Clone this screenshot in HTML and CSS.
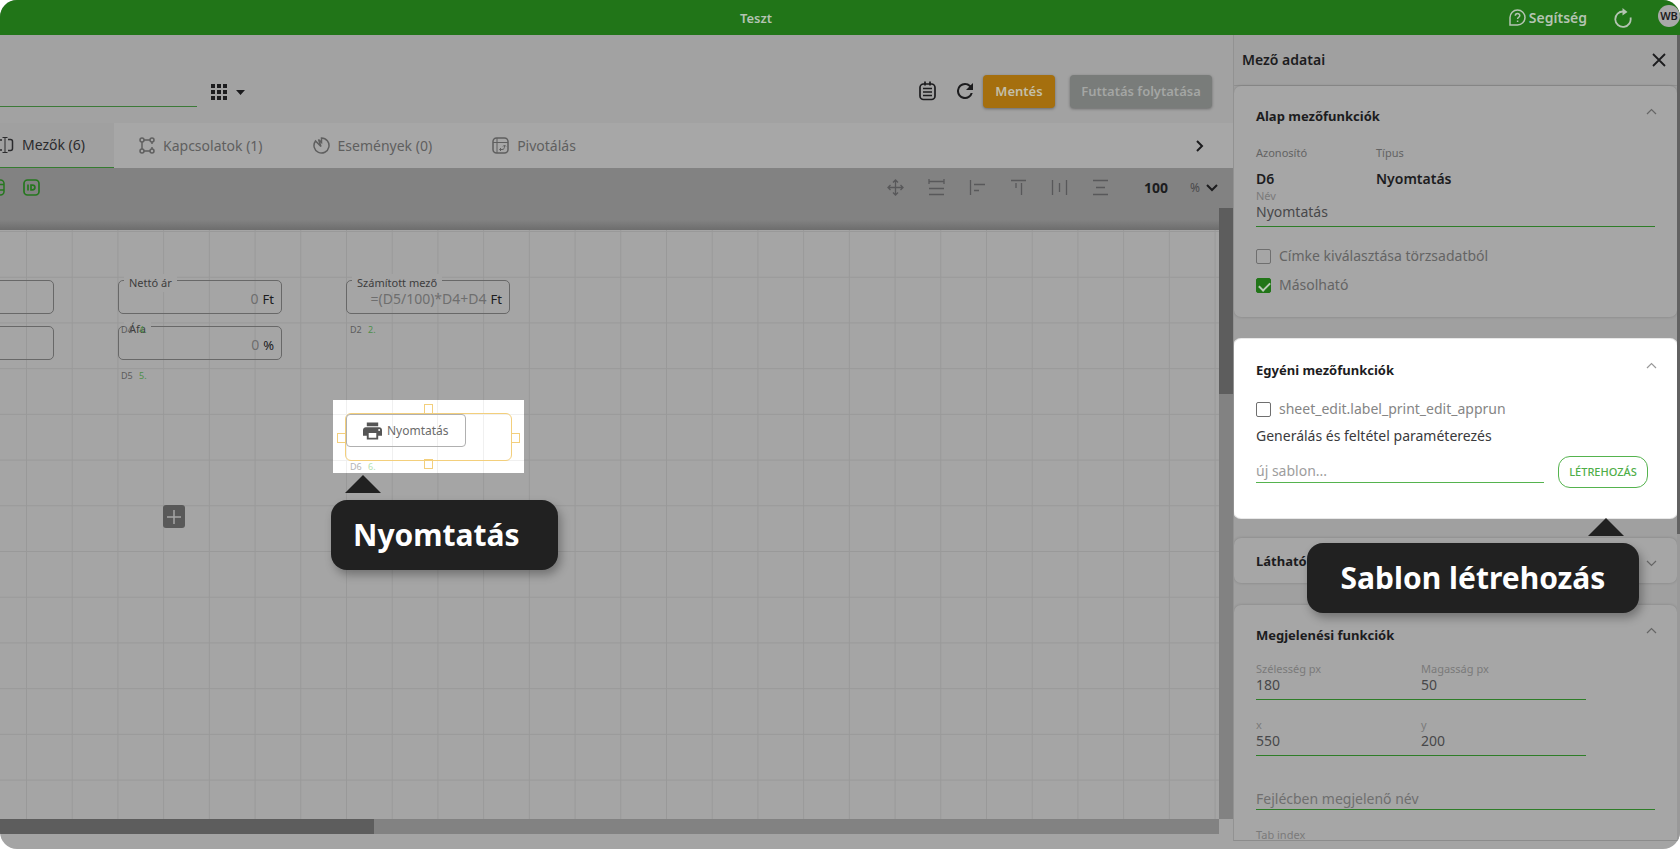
FILE: index.html
```html
<!DOCTYPE html>
<html lang="hu">
<head>
<meta charset="utf-8">
<title>Teszt</title>
<link rel="stylesheet" href="styles.css">
</head>
<body>
<div class="app">
  <header class="topbar">
    <h1 class="topbar-title">Teszt</h1>
    <div class="topbar-actions">
      <a class="help" href="#help">
        <svg width="17" height="17" viewBox="0 0 17 17" fill="none" stroke="currentColor" stroke-width="1.5"><path d="M1 16V8.500A7.500 7.500 0 1 1 8.500 16Z"/><path d="M6.300 6.800c0-3 4.500-2.900 4.500-.2 0 1.700-2.200 1.600-2.200 3.400M8.600 11.500v1.500"/></svg>
        Segítség
      </a>
      <button class="icon-btn" aria-label="Újratöltés">
        <svg width="20" height="20" viewBox="0 0 20 20" fill="none" stroke="currentColor" stroke-width="1.800"><path d="M17.500 9.500A7.700 7.700 0 1 1 10.500 3.500"/><path d="M9.500 0 14.500 4 9.500 7.500Z" fill="currentColor" stroke="none"/></svg>
      </button>
      <span class="avatar">WB</span>
    </div>
  </header>

  <div class="body">
    <main class="work">
      <div class="titlebar">
        <input class="name-input" type="text" aria-label="Munkalap neve">
        <button class="icon-btn grid-btn" aria-label="Nézet">
          <svg width="34" height="16" viewBox="0 0 34 16" fill="currentColor"><path d="M0 0h4v4H0zM6 0h4v4H6zM12 0h4v4h-4zM0 6h4v4H0zM6 6h4v4H6zM12 6h4v4h-4zM0 12h4v4H0zM6 12h4v4H6zM12 12h4v4h-4zM25 6h9l-4.500 5z"/></svg>
        </button>
        <span class="spacer"></span>
        <button class="icon-btn" aria-label="Lista">
          <svg width="18" height="20" viewBox="0 0 18 20" fill="none" stroke="currentColor" stroke-width="1.700"><rect x="1" y="3" width="15" height="15.500" rx="3.500"/><path d="M4 7.500h9M4 11h9M4 14.500h9M6 .5v4M11 .5v4"/></svg>
        </button>
        <button class="icon-btn reload" aria-label="Frissítés">
          <svg width="16" height="16" viewBox="4 4 16 16" fill="currentColor"><path d="M17.650 6.350A7.960 7.960 0 0 0 12 4a8 8 0 1 0 7.730 10h-2.080A6 6 0 1 1 12 6c1.660 0 3.140.69 4.220 1.780L13 11h7V4z"/></svg>
        </button>
        <button class="btn btn-save">Mentés</button>
        <button class="btn btn-run">Futtatás folytatása</button>
      </div>

      <nav class="tabs">
        <a class="tab tab-active" href="#mezok">
          <svg width="18" height="18" viewBox="0 0 18 18" fill="none" stroke="currentColor" stroke-width="1.500"><path d="M6 4H1v10h5M12 3.500h2.500a2 2 0 0 1 2 2v7a2 2 0 0 1-2 2H12"/><path d="M9 2v14M6.500 1.500H9h2.500M6.500 16.500h5" stroke-width="1"/></svg>
          Mezők (6)</a>
        <a class="tab" href="#kapcsolatok">
          <svg width="16" height="17" viewBox="0 0 16 17" fill="none" stroke="currentColor" stroke-width="1.500"><circle cx="3" cy="3" r="2"/><circle cx="13" cy="3" r="2"/><circle cx="3" cy="14" r="2"/><circle cx="13" cy="14" r="2"/><path d="M5 3h6M5 14h6M3 5v7M13 5v2M13 10v2"/></svg>
          Kapcsolatok (1)</a>
        <a class="tab" href="#esemenyek">
          <svg width="17" height="17" viewBox="0 0 17 17" fill="none" stroke="currentColor" stroke-width="1.500"><path d="M8.500 1a7.500 7.500 0 1 1-6 3L8 9.500 5.500 2.500 8.500 5.500Z"/></svg>
          Események (0)</a>
        <a class="tab" href="#pivot">
          <svg width="17" height="17" viewBox="0 0 17 17" fill="none" stroke="currentColor" stroke-width="1.500"><rect x="1" y="1" width="15" height="15" rx="3.500"/><path d="M1 5.500h15M5 1v15M8 12.500h2c2 0 2.500-1 2.500-4M9 11l-1.500 1.500L9 14M11 9.500l1.500-1.500L14 9.500" stroke-width="1"/></svg>
          Pivotálás</a>
        <span class="spacer"></span>
        <button class="icon-btn tabs-next" aria-label="További fülek">
          <svg width="8" height="12" viewBox="0 0 8 12" fill="none" stroke="currentColor" stroke-width="2"><path d="m1 1 5 5-5 5"/></svg>
        </button>
      </nav>

      <div class="toolbar">
        <button class="icon-btn tool-green cut" aria-label="Táblázat">
          <svg width="17" height="17" viewBox="0 0 17 17" fill="none" stroke="currentColor" stroke-width="1.500"><rect x="1" y="1" width="15" height="15" rx="3.500"/><path d="M3 5.500h13M3 11h13"/></svg>
        </button>
        <button class="icon-btn tool-green" aria-label="Azonosítók">
          <svg width="17" height="17" viewBox="0 0 17 17" fill="none" stroke="currentColor" stroke-width="1.700"><rect x="1" y="1" width="15" height="15" rx="3.500"/><path d="M5 5.500v6M8 6.200v4.600h1.500c3.200 0 3.200-4.600 0-4.600z"/></svg>
        </button>
        <span class="spacer"></span>
        <div class="tools">
          <button class="icon-btn" aria-label="Mozgatás"><svg width="17" height="17" viewBox="0 0 17 17" fill="none" stroke="currentColor" stroke-width="1.300"><path d="M8.500 1v15M1 8.500h15M6 3.500 8.500 1 11 3.500M6 13.500 8.500 16l2.500-2.500M3.500 6 1 8.500 3.500 11M13.500 6 16 8.500 13.500 11"/></svg></button>
          <button class="icon-btn" aria-label="Szélesség"><svg width="17" height="17" viewBox="0 0 17 17" fill="none" stroke="currentColor" stroke-width="1.300"><path d="M1 0v5M16 0v5M1 2.500h15M1 9.500h15M1 15.500h15"/></svg></button>
          <button class="icon-btn" aria-label="Balra igazítás"><svg width="17" height="17" viewBox="0 0 17 17" fill="none" stroke="currentColor" stroke-width="1.300"><path d="M1.500 1v15M5 5.500h11M5 11.500h5"/></svg></button>
          <button class="icon-btn" aria-label="Felülre igazítás"><svg width="17" height="17" viewBox="0 0 17 17" fill="none" stroke="currentColor" stroke-width="1.300"><path d="M1 1.500h15M11.500 4v12M6 4v5"/></svg></button>
          <button class="icon-btn" aria-label="Vízszintes elosztás"><svg width="17" height="17" viewBox="0 0 17 17" fill="none" stroke="currentColor" stroke-width="1.300"><path d="M1.500 1v15M15.500 1v15M8.500 4v9"/></svg></button>
          <button class="icon-btn" aria-label="Függőleges elosztás"><svg width="17" height="17" viewBox="0 0 17 17" fill="none" stroke="currentColor" stroke-width="1.300"><path d="M1 1.500h15M1 15.500h15M4 8.500h9"/></svg></button>
        </div>
        <div class="zoom">
          <input class="zoom-value" type="text" value="100" aria-label="Nagyítás">
          <span class="zoom-unit">%</span>
          <svg width="12" height="8" viewBox="0 0 12 8" fill="none" stroke="currentColor" stroke-width="2"><path d="m1 1 5 5 5-5"/></svg>
        </div>
      </div>

      <div class="stage">
        <div class="canvas">
          <svg class="grid" aria-hidden="true">
            <defs>
              <pattern id="cells" x="26" y="1" width="45.714" height="45.714" patternUnits="userSpaceOnUse"><path d="M.5 0v45.714M0 .5h45.714" stroke="#999" stroke-width="1"/></pattern>
            </defs>
            <rect width="100%" height="100%" fill="url(#cells)"/>
          </svg>

          <div class="field field-a1"></div>
          <div class="field field-a2"></div>

          <div class="field field-netto">
            <label for="netto">Nettó ár</label>
            <input id="netto" type="text" value="0"><span>Ft</span>
          </div>
          <div class="field field-afa">
            <label for="afa">Áfa</label>
            <input id="afa" type="text" value="0"><span>%</span>
          </div>
          <span class="tag tag-d4">D4 <b>4.</b></span>
          <span class="tag tag-d5">D5 <b>5.</b></span>
          <div class="field field-calc">
            <label for="calc">Számított mező</label>
            <input id="calc" type="text" value="=(D5/100)*D4+D4"><span>Ft</span>
          </div>
          <span class="tag tag-d2">D2 <b>2.</b></span>

          <button class="add" aria-label="Mező hozzáadása">
            <svg width="14" height="14" viewBox="0 0 14 14" stroke="currentColor" stroke-width="1.500"><path d="M7 0v14M0 7h14"/></svg>
          </button>

          <div class="spot">
            <svg class="grid" aria-hidden="true">
              <path d="M13.500 0v73M59.500 0v73M104.500 0v73M150.500 0v73M0 14.500h191M0 60.500h191" stroke="#f0f0f0"/>
            </svg>
            <div class="selection">
              <button class="print">
                <svg width="19" height="18" viewBox="2 3 20 18" fill="currentColor"><path d="M19 8H5c-1.660 0-3 1.340-3 3v6h4v4h12v-4h4v-6c0-1.660-1.340-3-3-3zm-3 11H8v-5h8v5zm3-7a1 1 0 1 1 0-2 1 1 0 0 1 0 2zM18 3H6v4h12z"/></svg>
                Nyomtatás
              </button>
              <i class="handle handle-t"></i><i class="handle handle-r"></i><i class="handle handle-b"></i><i class="handle handle-l"></i>
            </div>
            <span class="tag tag-d6">D6 <b>6.</b></span>
            <div class="callout callout-print">Nyomtatás</div>
          </div>
        </div>
        <div class="vscroll"><div class="vthumb"></div></div>
      </div>
      <div class="hscroll"><div class="hthumb"></div></div>
    </main>

    <aside class="panel">
      <div class="panel-head">
        <h2>Mező adatai</h2>
        <button class="icon-btn" aria-label="Bezárás"><svg width="14" height="14" viewBox="0 0 14 14" fill="none" stroke="currentColor" stroke-width="1.800"><path d="m1 1 12 12M13 1 1 13"/></svg></button>
      </div>

      <section class="card card-base">
        <div class="card-head"><h3>Alap mezőfunkciók</h3>
          <button class="icon-btn chev" aria-label="Összecsukás"><svg width="11" height="7" viewBox="0 0 11 7" fill="none" stroke="currentColor" stroke-width="1.200"><path d="m1 6 4.500-4.500L10 6"/></svg></button></div>
        <dl class="facts">
          <div><dt>Azonosító</dt><dd>D6</dd></div>
          <div><dt>Típus</dt><dd>Nyomtatás</dd></div>
        </dl>
        <div class="entry">
          <label for="nev">Név</label>
          <input id="nev" type="text" value="Nyomtatás">
        </div>
        <label class="check check-first"><input type="checkbox"><span>Címke kiválasztása törzsadatból</span></label>
        <label class="check"><input type="checkbox" checked><span>Másolható</span></label>
      </section>

      <section class="card card-custom">
        <div class="card-head"><h3>Egyéni mezőfunkciók</h3>
          <button class="icon-btn chev" aria-label="Összecsukás"><svg width="11" height="7" viewBox="0 0 11 7" fill="none" stroke="currentColor" stroke-width="1.200"><path d="m1 6 4.500-4.500L10 6"/></svg></button></div>
        <label class="check"><input type="checkbox"><span>sheet_edit.label_print_edit_apprun</span></label>
        <p class="note">Generálás és feltétel paraméterezés</p>
        <div class="create">
          <input type="text" placeholder="új sablon..." aria-label="új sablon">
          <button class="btn-create">LÉTREHOZÁS</button>
        </div>
        <div class="callout callout-create">Sablon létrehozás</div>
      </section>

      <section class="card card-closed">
        <div class="card-head"><h3>Látható</h3>
          <button class="icon-btn chev" aria-label="Kinyitás"><svg width="11" height="7" viewBox="0 0 11 7" fill="none" stroke="currentColor" stroke-width="1.200"><path d="m1 1 4.500 4.500L10 1"/></svg></button></div>
      </section>

      <section class="card card-look">
        <div class="card-head"><h3>Megjelenési funkciók</h3>
          <button class="icon-btn chev" aria-label="Összecsukás"><svg width="11" height="7" viewBox="0 0 11 7" fill="none" stroke="currentColor" stroke-width="1.200"><path d="m1 6 4.500-4.500L10 6"/></svg></button></div>
        <div class="pairs">
          <div class="entry"><label for="w">Szélesség px</label><input id="w" type="text" value="180"></div>
          <div class="entry"><label for="h">Magasság px</label><input id="h" type="text" value="50"></div>
          <div class="entry"><label for="x">x</label><input id="x" type="text" value="550"></div>
          <div class="entry"><label for="y">y</label><input id="y" type="text" value="200"></div>
        </div>
        <input class="header-name" type="text" placeholder="Fejlécben megjelenő név" aria-label="Fejlécben megjelenő név">
        <div class="entry"><label for="tab">Tab index</label><input id="tab" type="text"></div>
      </section>
    </aside>
    <div class="page-scroll"><div class="page-thumb"></div></div>
  </div>
</div>
</body>
</html>
```

FILE: styles.css
```css
* { box-sizing: border-box; }

body {
  margin: 0;
  background: #fff;
  color: #1c1c1e;
  font-family: "Noto Sans", "Open Sans", sans-serif;
  font-size: 14px;
  line-height: 20px;
}

button, input {
  margin: 0;
  padding: 0;
  border: 0;
  border-radius: 0;
  background: none;
  color: inherit;
  font: inherit;
}

input { min-width: 0; outline: 0; }
h1, h2, h3, p, dl, dd { margin: 0; font-size: inherit; }
svg { display: block; flex: none; }
a { color: inherit; text-decoration: none; }

.app {
  display: flex;
  flex-direction: column;
  height: 100vh;
  overflow: hidden;
  border-radius: 17px;
  background: #a4a4a4;
}

.spacer { flex: 1; }
.icon-btn { display: flex; flex: none; }

/* Top bar */
.topbar {
  display: grid;
  grid-template-columns: 1fr auto 1fr;
  align-items: center;
  flex: none;
  height: 35px;
  background: #217518;
  color: #b4c4b2;
}
.topbar-title { grid-column: 2; margin-right: 168px; font-size: 13px; font-weight: 600; }
.topbar-actions { display: flex; justify-content: flex-end; align-items: center; }
.help { display: flex; align-items: center; gap: 3px; margin-right: 26px; font-weight: 600; }
.topbar-actions .icon-btn { margin-right: 25px; }
.avatar {
  flex: none;
  width: 22px;
  height: 22px;
  margin-bottom: 4px;
  border-radius: 50%;
  background: #a9a9a9;
  color: #1c1c1e;
  font-size: 11px;
  font-weight: 600;
  line-height: 22px;
  text-align: center;
}

.body { display: flex; flex: 1; min-height: 0; }
.work { display: flex; flex: 1; flex-direction: column; min-width: 0; padding-bottom: 15px; }

/* Title row */
.titlebar {
  display: flex;
  align-items: center;
  flex: none;
  height: 88px;
  padding: 28px 21px 0 0;
  background: #a2a2a2;
}
.titlebar > .icon-btn { margin-bottom: 4px; }
.name-input { align-self: flex-start; width: 197px; height: 44px; border-bottom: 1px solid #3c7a38; }
.titlebar > .grid-btn { margin: 0 0 2px 14px; }
.titlebar > .reload { margin: 0 10px 4px 20px; }
.btn {
  height: 33px;
  margin-bottom: 4px;
  border-radius: 4px;
  box-shadow: 0 1px 3px rgba(0, 0, 0, .35);
  font-size: 13px;
  font-weight: 600;
}
.btn-save { width: 72px; background: #a56f0e; color: #c3bfa9; }
.btn-run { width: 142px; margin-left: 15px; background: #797c7a; color: #a4a6a4; }

/* Tabs */
.tabs { display: flex; flex: none; height: 45px; background: #a7a7a7; color: #5f5f5f; }
.tab { display: flex; align-items: center; gap: 8px; margin-left: 25px; }
.tab:nth-child(3) { margin-left: 50px; }
.tab:nth-child(4) { margin-left: 60px; }
.tab-active {
  width: 114px;
  margin-left: 0;
  overflow: hidden;
  border-bottom: 1px solid #357c30;
  background: #a0a0a0;
  color: #2b2b2d;
}
.tab-active svg { margin-left: -4px; }
.tabs-next { align-items: center; margin-right: 29px; color: #1c1c1e; }

/* Toolbar */
.toolbar {
  display: flex;
  flex: none;
  height: 62px;
  padding: 11px 15px 0 0;
  background: linear-gradient(#828282 52px, #6d6d6d);
  color: #58585a;
}
.tool-green { color: #25771e; }
.cut { margin: 0 18px 0 -12px; }
.tools { display: flex; gap: 24px; }
.zoom { display: flex; height: 17px; align-items: center; color: #1c1c1e; }
.zoom-value { width: 28px; margin-left: 35px; font-weight: 700; }
.zoom-unit { margin: 0 6px 0 18px; color: #4a4a4c; font-size: 12px; }

/* Canvas */
.stage { display: flex; flex: 1; min-height: 0; }
.canvas { position: relative; flex: 1; background: #a5a5a5; }
.grid { position: absolute; inset: 0; width: 100%; height: 100%; }
.vscroll { flex: none; width: 14px; margin-top: -22px; background: #828282; }
.vthumb { height: 186px; background: #5d5d5d; }
.hscroll { flex: none; height: 15px; margin-right: 14px; background: #828282; }
.hthumb { width: 374px; height: 100%; background: #5d5d5d; }

.field {
  position: absolute;
  display: flex;
  align-items: center;
  justify-content: flex-end;
  gap: 4px;
  width: 164px;
  height: 34px;
  padding: 4px 7px 0;
  border: 1px solid #686868;
  border-radius: 5px;
}
.field label {
  position: absolute;
  top: -7px;
  left: 5px;
  padding: 0 5px;
  background: #a5a5a5;
  color: #3d3d3d;
  font-size: 11px;
  line-height: 18px;
}
.field span { font-size: 13px; }
.field input { flex: 1; color: #6e6e6e; text-align: right; }
.field-a1 { top: 50px; left: -110px; }
.field-a2 { top: 96px; left: -110px; }
.field-netto { top: 50px; left: 118px; }
.field-afa { top: 96px; left: 118px; }
.field-calc { top: 50px; left: 346px; }

.tag { position: absolute; color: #5c5c5c; font-size: 9px; line-height: 12px; }
.tag b { margin-left: 4px; color: #4e8f4a; font-weight: 400; }
.tag-d4 { top: 94px; left: 121px; }
.tag-d5 { top: 140px; left: 121px; }
.tag-d2 { top: 94px; left: 350px; }

.add {
  position: absolute;
  top: 275px;
  left: 163px;
  display: grid;
  place-items: center;
  width: 22px;
  height: 23px;
  border-radius: 3px;
  background: #595959;
  color: #a5a5a5;
}

.spot { position: absolute; top: 170px; left: 333px; width: 191px; height: 73px; background: #fff; }
.selection {
  position: absolute;
  top: 13px;
  left: 12px;
  width: 167px;
  height: 48px;
  border: 1px solid #f3cf7c;
  border-radius: 6px;
}
.print {
  display: flex;
  align-items: center;
  gap: 5px;
  width: 120px;
  height: 33px;
  padding-left: 16px;
  border: 1px solid #b0b0b0;
  border-radius: 4px;
  color: #6b6b6b;
  font-size: 12px;
}
.print svg { color: #555; }
.handle { position: absolute; width: 9px; height: 10px; border: 1px solid #f3cf7c; }
.handle-t { top: -10px; left: 78px; }
.handle-b { bottom: -9px; left: 78px; }
.handle-l { top: 19px; left: -9px; }
.handle-r { top: 19px; right: -9px; }
.tag-d6 { top: 61px; left: 17px; color: #b3b3b3; }
.tag-d6 b { color: #b5e2b2; }

/* Callouts */
.callout {
  position: absolute;
  z-index: 2;
  height: 70px;
  border-radius: 16px;
  background: #212121;
  box-shadow: 3px 5px 10px rgba(0, 0, 0, .3);
  color: #fff;
  font-size: 30px;
  font-weight: 700;
  line-height: 70px;
  white-space: nowrap;
}
.callout::before {
  content: "";
  position: absolute;
  top: -25px;
  border: 18px solid transparent;
  border-top-width: 0;
  border-bottom-color: #212121;
}
.callout-print { top: 100px; left: -2px; width: 227px; padding-left: 22px; }
.callout-print::before { left: 14px; }
.callout-create { top: 204px; right: 38px; width: 332px; text-align: center; }
.callout-create::before { right: 15px; }

/* Side panel */
.panel {
  display: flex;
  flex-direction: column;
  flex: none;
  width: 444px;
  margin-bottom: 8px;
  overflow: hidden;
  border-left: 1px solid #929292;
  border-bottom: 1px solid #8c8c8c;
  background: #a0a0a0;
}
.panel-head {
  display: flex;
  align-items: center;
  justify-content: space-between;
  flex: none;
  height: 51px;
  padding: 0 11px 0 8px;
  border-bottom: 1px solid #909090;
}
.panel-head h2 { font-weight: 600; }
.card {
  position: relative;
  flex: none;
  margin-bottom: 22px;
  padding: 20px 22px 0 22px;
  border-radius: 7px;
  background: #a6a6a6;
  box-shadow: 0 0 3px rgba(0, 0, 0, .2);
}
.card h3 { font-size: 13px; font-weight: 700; }
.card-head { display: flex; justify-content: space-between; }
.chev { margin-right: -2px; padding: 2px 0 10px; color: #666; }
.card-base { height: 231px; }

.facts { display: flex; margin-top: 18px; }
.facts div { width: 120px; }
.facts dt { color: #636363; font-size: 11px; line-height: 18px; }
.facts dd { margin-top: 7px; font-weight: 600; }

.entry { display: flex; flex-direction: column; }
.entry label { color: #7a7a7a; font-size: 11px; line-height: 14px; }
.entry input { height: 24px; padding-bottom: 6px; border-bottom: 1px solid #2e7d28; color: #48484a; }

.check { display: flex; align-items: center; gap: 8px; height: 20px; color: #646464; }
.check-first { margin: 19px 0 9px; }
.check input {
  flex: none;
  width: 15px;
  height: 15px;
  appearance: none;
  border: 1px solid #6f6f6f;
  border-radius: 2px;
}
.check input:checked {
  border-color: #217518;
  background: #217518;
}
.check input:checked::before {
  content: "";
  display: block;
  width: 9px;
  height: 5px;
  margin: 3px 2px;
  border: solid #b9c9b7;
  border-width: 0 0 2px 2px;
  transform: rotate(-45deg);
}

.card-custom {
  z-index: 1;
  height: 179px;
  margin-bottom: 20px;
  padding-top: 21px;
  background: #fff;
  box-shadow: 0 0 0 1px #e8e8e8;
}
.card-custom .check { margin-top: 19px; color: #858585; }
.card-custom .chev { color: #999; }
.note { margin-top: 7px; color: #3a3a3c; }
.create { display: flex; align-items: flex-start; margin-top: 10px; padding-right: 7px; }
.create input { flex: 1; height: 27px; padding-top: 2px; border-bottom: 1px solid #55b34e; }
.create input::placeholder { color: #9d9d9d; }
.btn-create {
  width: 90px;
  height: 32px;
  margin-left: 14px;
  border: 1px solid #55b34e;
  border-radius: 12px;
  color: #4fae48;
  font-size: 11px;
  font-weight: 500;
}

.card-closed { height: 45px; padding-top: 13px; }
.card-closed .chev { padding: 9px 0 0; }

.card-look { margin-bottom: 0; padding-top: 20px; }
.pairs { display: grid; grid-template-columns: 165px 165px; row-gap: 17px; margin-top: 16px; }
.card-look .entry label { line-height: 15px; }
.header-name { display: block; width: 100%; height: 24px; margin: 30px 0 17px; padding-top: 2px; border-bottom: 1px solid #2e7d28; }
.header-name::placeholder { color: #6f6f6f; }

.page-scroll { flex: none; width: 3px; margin-bottom: 8px; background: #999; }
.page-thumb { height: 499px; background: #626262; }
```
